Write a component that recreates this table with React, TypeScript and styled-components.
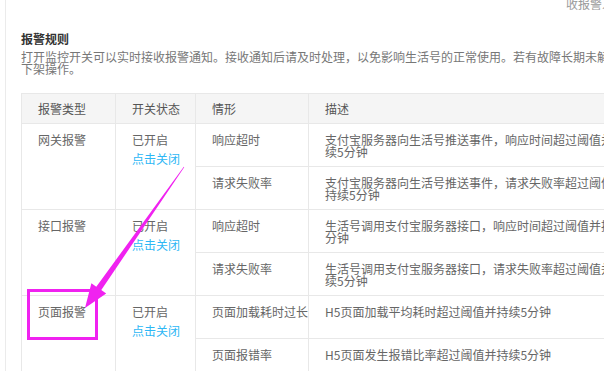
import styled, { createGlobalStyle } from "styled-components";

const GlobalStyle = createGlobalStyle`
  html, body {
    margin: 0;
    padding: 0;
    background: #fff;
    overflow: hidden;
  }
  body {
    font-family: "Noto Sans CJK SC", "Noto Sans", sans-serif;
    font-size: 12px;
  }
`;

const Frame = styled.div`
  position: relative;
  margin-left: 5px;
  padding-left: 15px;
  border-left: 1px solid #ebebeb;
  width: 628px;
  min-height: 100vh;
`;

const TopBar = styled.div`
  margin-top: -2px;
  height: 12px;
  line-height: 12px;
  padding-left: 545px;
  color: #9a9a9a;
  white-space: nowrap;
`;

const Title = styled.h3`
  margin: 23px 0 0;
  font-size: 12px;
  line-height: 12px;
  font-weight: bold;
  color: #333;
`;

const Intro = styled.p`
  margin: 6px 0 0;
  line-height: 12px;
  color: #777;
`;

const Table = styled.table`
  margin-top: 18px;
  width: 616px;
  border-collapse: collapse;
  table-layout: fixed;
  border: 1px solid #e8e8e8;
`;

const Head = styled.th<{ $w?: number }>`
  box-sizing: border-box;
  width: ${(p) => (p.$w ? `${p.$w}px` : "auto")};
  height: 30px;
  padding: 0 2px 0 16px;
  background: #f5f5f5;
  border: 1px solid #e8e8e8;
  text-align: left;
  font-weight: normal;
  line-height: 12px;
  color: #555;
  vertical-align: middle;
`;

const Row = styled.tr`
  height: 43px;
`;

const Cell = styled.td<{ $nowrap?: boolean }>`
  padding: 10px 2px 0 16px;
  border: 1px solid #e8e8e8;
  vertical-align: top;
  line-height: 12px;
  color: #666;
  white-space: ${(p) => (p.$nowrap ? "nowrap" : "normal")};
`;

const Toggle = styled.a`
  display: block;
  margin-top: 7px;
  color: #2db7f5;
  text-decoration: none;
  cursor: pointer;
`;

const Overlay = styled.svg`
  position: absolute;
  left: 0;
  top: 0;
  width: 604px;
  height: 371px;
  pointer-events: none;
`;

type Rule = {
  type: string;
  items: { case: string; desc: string }[];
};

const rules: Rule[] = [
  {
    type: "网关报警",
    items: [
      { case: "响应超时", desc: "支付宝服务器向生活号推送事件，响应时间超过阈值并持续5分钟" },
      { case: "请求失败率", desc: "支付宝服务器向生活号推送事件，请求失败率超过阈值并持续5分钟" },
    ],
  },
  {
    type: "接口报警",
    items: [
      { case: "响应超时", desc: "生活号调用支付宝服务器接口，响应时间超过阈值并持续5分钟" },
      { case: "请求失败率", desc: "生活号调用支付宝服务器接口，请求失败率超过阈值并持续5分钟" },
    ],
  },
  {
    type: "页面报警",
    items: [
      { case: "页面加载耗时过长", desc: "H5页面加载平均耗时超过阈值并持续5分钟" },
      { case: "页面报错率", desc: "H5页面发生报错比率超过阈值并持续5分钟" },
    ],
  },
];

const App = () => {
  return (
    <>
      <GlobalStyle />
      <Frame>
        <TopBar>收报警人设置</TopBar>
        <Title>报警规则</Title>
        <Intro>
          打开监控开关可以实时接收报警通知。接收通知后请及时处理，以免影响生活号的正常使用。若有故障长期未解决，将下架操作。
        </Intro>
        <Table>
          <thead>
            <tr>
              <Head $w={94}>报警类型</Head>
              <Head $w={80}>开关状态</Head>
              <Head $w={113}>情形</Head>
              <Head>描述</Head>
            </tr>
          </thead>
          <tbody>
            {rules.map((rule) =>
              rule.items.map((item, i) => (
                <Row key={rule.type + item.case}>
                  {i === 0 && (
                    <>
                      <Cell rowSpan={rule.items.length}>{rule.type}</Cell>
                      <Cell rowSpan={rule.items.length}>
                        已开启
                        <Toggle>点击关闭</Toggle>
                      </Cell>
                    </>
                  )}
                  <Cell $nowrap>{item.case}</Cell>
                  <Cell>{item.desc}</Cell>
                </Row>
              ))
            )}
          </tbody>
        </Table>
      </Frame>
      <Overlay viewBox="0 0 604 371">
        <polygon
          fill="#f022f0"
          points="184.2,167.2 101.3,290.1 106.2,293.6 85,308 91.4,283.2 96.3,286.7 183.8,166.8"
        />
        <rect x="28.5" y="290.5" width="68" height="48" fill="none" stroke="#f022f0" strokeWidth="3" />
      </Overlay>
    </>
  );
};

export default App;
